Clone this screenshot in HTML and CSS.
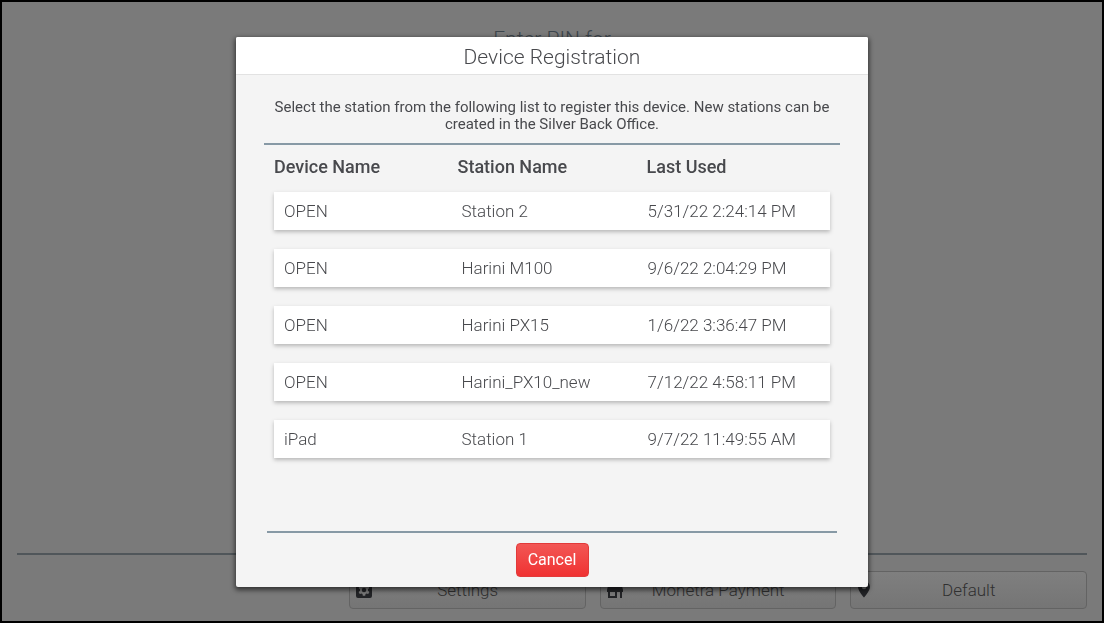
FILE: index.html
```html
<!DOCTYPE html>
<html lang="en">
<head>
<meta charset="utf-8">
<title>Device Registration</title>
<link rel="stylesheet" href="styles.css">
</head>
<body>
<main class="screen">
  <h1 class="pin-title">Enter PIN for</h1>
  <footer class="toolbar">
    <div class="toolbar-spacer"></div>
    <button class="tool" type="button">
      <svg class="tool-icon" viewBox="0 0 18 18" aria-hidden="true"><path fill-rule="evenodd" d="M3 1h12a2 2 0 0 1 2 2v12a2 2 0 0 1-2 2H3a2 2 0 0 1-2-2V3a2 2 0 0 1 2-2zM7.8 3.2l-.3 1.7-1 .6-1.7-.6-1.2 2.1L5 8.2v1.6l-1.400 1.200 1.200 2.100 1.700-.6 1 .6.3 1.700h2.400l.3-1.700 1-.6 1.700.6 1.200-2.100L13 9.800V8.200L14.400 7l-1.200-2.100-1.700.6-1-.6-.3-1.700zM9 6.800a2.200 2.200 0 1 1 0 4.400 2.200 2.200 0 0 1 0-4.400z"/></svg>
      <span class="tool-label">Settings</span>
    </button>
    <button class="tool" type="button">
      <svg class="tool-icon" viewBox="0 0 18 18" aria-hidden="true"><path fill-rule="evenodd" d="M2 2h14v2H2zM2 5h14l1 4v2h-1v6h-2v-6h-3v6H2v-6H1V9zM4 11v4h5v-4z"/></svg>
      <span class="tool-label">Monetra Payment</span>
    </button>
    <button class="tool" type="button">
      <svg class="tool-icon" viewBox="0 0 18 18" aria-hidden="true"><path fill-rule="evenodd" d="M8 0a6 6 0 0 1 6 6c0 4-6 10.500-6 10.500S2 10 2 6a6 6 0 0 1 6-6zm0 3.800a2.200 2.200 0 1 0 0 4.400 2.200 2.200 0 0 0 0-4.400z"/></svg>
      <span class="tool-label">Default</span>
    </button>
  </footer>
</main>
<div class="overlay">
  <section class="dialog" role="dialog" aria-modal="true" aria-labelledby="dialog-title">
    <h2 class="dialog-title" id="dialog-title">Device Registration</h2>
    <div class="dialog-body">
      <p class="intro">Select the station from the following list to register this device. New stations can be created in the Silver Back Office.</p>
      <div class="list">
        <table class="stations">
          <thead>
            <tr><th scope="col">Device Name</th><th scope="col">Station Name</th><th scope="col">Last Used</th></tr>
          </thead>
          <tbody>
            <tr><td>OPEN</td><td>Station 2</td><td>5/31/22 2:24:14 PM</td></tr>
            <tr><td>OPEN</td><td>Harini M100</td><td>9/6/22 2:04:29 PM</td></tr>
            <tr><td>OPEN</td><td>Harini PX15</td><td>1/6/22 3:36:47 PM</td></tr>
            <tr><td>OPEN</td><td>Harini_PX10_new</td><td>7/12/22 4:58:11 PM</td></tr>
            <tr><td>iPad</td><td>Station 1</td><td>9/7/22 11:49:55 AM</td></tr>
          </tbody>
        </table>
      </div>
      <div class="actions">
        <button class="cancel" type="button">Cancel</button>
      </div>
    </div>
  </section>
</div>
</body>
</html>
```
FILE: styles.css
```css
* { box-sizing: border-box; }

body {
  margin: 0;
  font-family: Roboto, "Liberation Sans", sans-serif;
  color: #48494d;
}

button { font-family: inherit; }

.screen {
  display: flex;
  flex-direction: column;
  justify-content: space-between;
  min-height: 100vh;
  padding: 24px 15px 12px;
  border: 2px solid #000;
  background: #7a7a7a;
}

.pin-title {
  margin: 0;
  font-size: 21px;
  line-height: 26px;
  font-weight: 300;
  text-align: center;
  color: #3c454c;
}

.toolbar {
  display: grid;
  grid-template-columns: 319fr 237fr 237fr 237fr;
  gap: 14px;
  padding-top: 16px;
  border-top: 2px solid #50565a;
}

.tool {
  display: flex;
  align-items: center;
  height: 38px;
  padding: 0 5px;
  border: 1px solid #636363;
  border-radius: 4px;
  background: linear-gradient(#7f7f7f, #757575);
  color: #303030;
  font-size: 17px;
  font-weight: 300;
}

.tool-icon {
  width: 18px;
  height: 18px;
  margin-right: -18px;
  fill: #222326;
}

.tool-label { flex: 1; }

.overlay {
  position: fixed;
  inset: 0;
  display: flex;
  align-items: center;
  justify-content: center;
}

.dialog {
  display: flex;
  flex-direction: column;
  width: 632px;
  max-width: 100%;
  min-height: 550px;
  border-radius: 2px;
  background: #f4f4f4;
  box-shadow: 0 2px 5px 1px rgba(0, 0, 0, 0.6);
}

.dialog-title {
  margin: 0;
  padding: 7px 0 4px;
  border-bottom: 1px solid #e2e2e2;
  border-radius: 2px 2px 0 0;
  background: #fff;
  font-size: 21px;
  line-height: 26px;
  font-weight: 300;
  text-align: center;
}

.dialog-body {
  flex: 1;
  display: flex;
  flex-direction: column;
  padding: 24px 28px 10px;
}

.intro {
  margin: 0;
  padding-bottom: 10px;
  font-size: 15px;
  line-height: 17px;
  text-align: center;
}

.list {
  flex: 1;
  padding: 0 10px;
  border-top: 2px solid #8799a5;
}

.stations {
  width: 100%;
  table-layout: fixed;
  border-collapse: separate;
  border-spacing: 0 19px;
  margin: -3px 0;
}

.stations th {
  height: 12px;
  padding: 0;
  font-size: 18px;
  line-height: 12px;
  font-weight: 500;
  text-align: left;
}

.stations td {
  height: 38px;
  padding: 0 0 0 4px;
  font-size: 17px;
  font-weight: 300;
}

.stations td:first-child { padding-left: 10px; }
.stations td:last-child { padding-left: 1px; }
.stations th:nth-child(2) { width: 34%; }

.stations tbody tr {
  background: #fff;
  box-shadow: 0 2px 4px rgba(0, 0, 0, 0.25);
}

.actions {
  display: flex;
  justify-content: center;
  margin: 0 3px;
  padding-top: 10px;
  border-top: 2px solid #8799a5;
}

.cancel {
  width: 73px;
  height: 34px;
  padding: 0;
  border: 1px solid #e23a3a;
  border-radius: 4px;
  background: linear-gradient(#f25755, #f03232);
  color: #fff;
  font-size: 16px;
}
```
